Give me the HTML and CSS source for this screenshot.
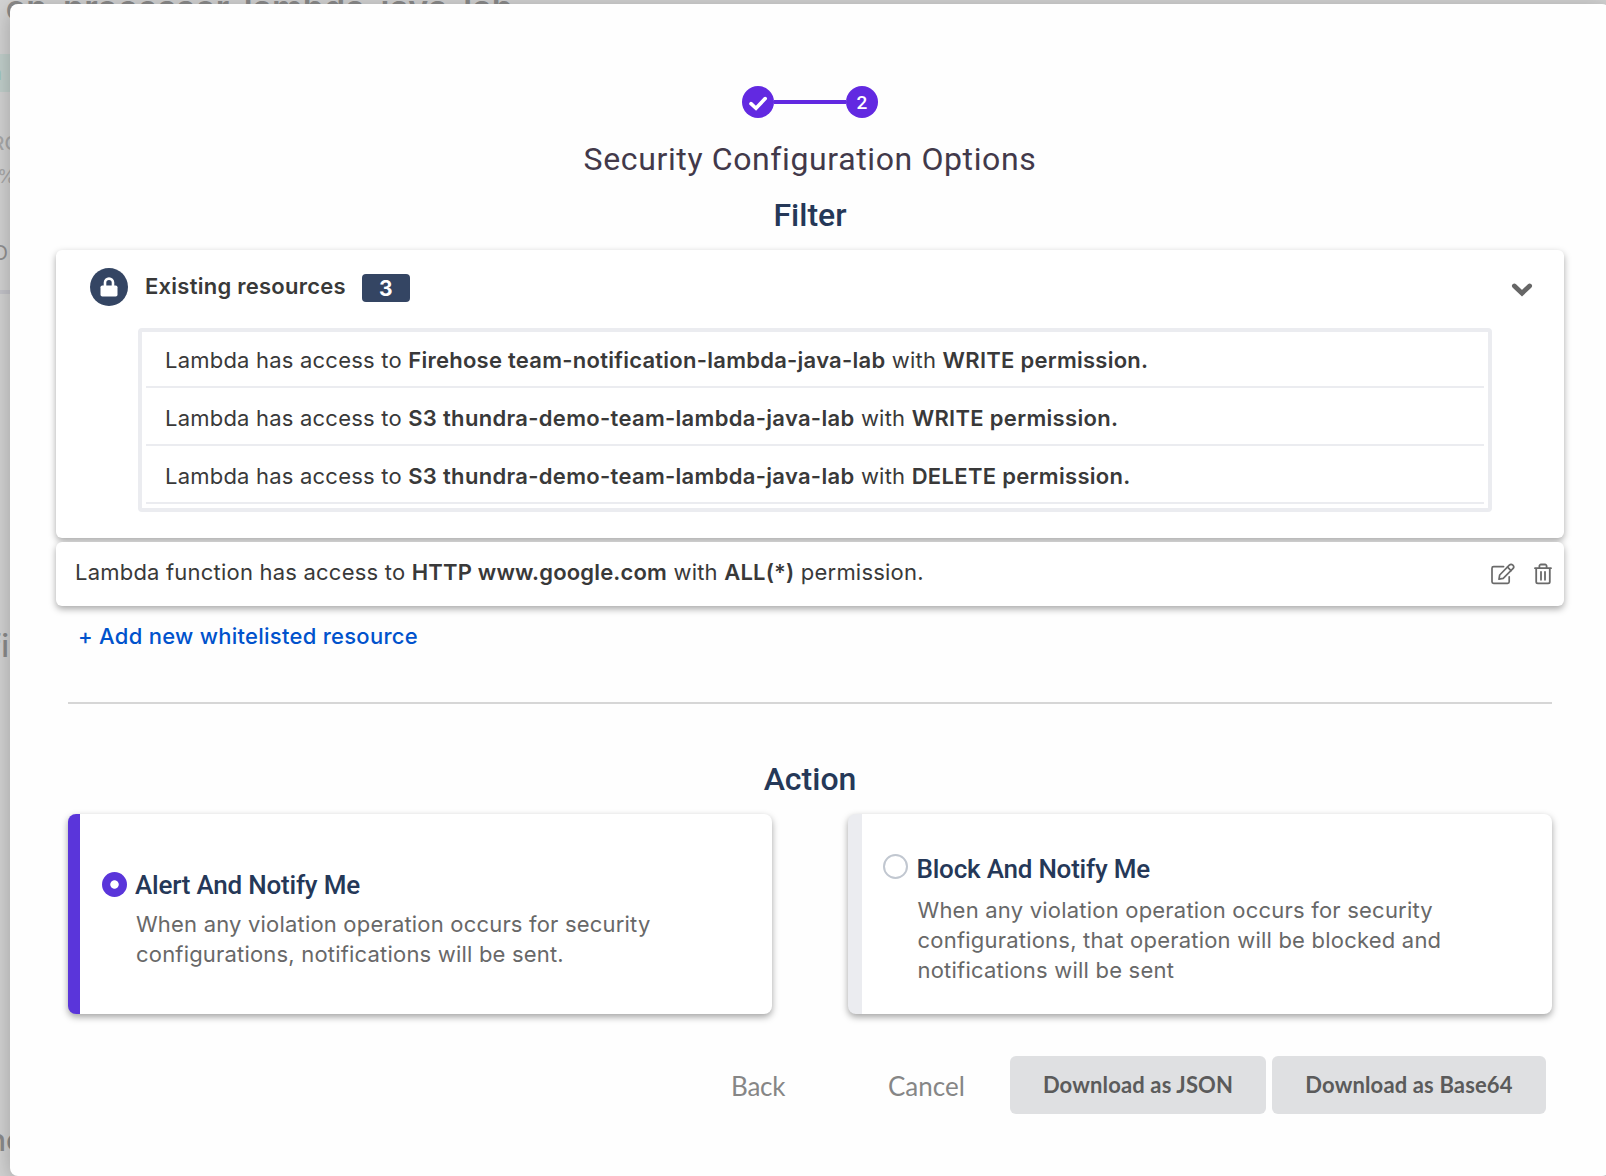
FILE: index.html
```html
<!DOCTYPE html>
<html lang="en">
<head>
<meta charset="utf-8">
<title>Security Configuration Options</title>
<link rel="stylesheet" href="styles.css">
</head>
<body>
<div class="backdrop" aria-hidden="true">
  <div class="bg-name">on-processor-lambda-java-lab</div>
  <div class="bg-tag">n</div>
  <div class="bg-label bg-pro">RO</div>
  <div class="bg-label bg-pct">%</div>
  <div class="bg-label bg-tab">D</div>
  <div class="bg-rule"></div>
  <div class="bg-head bg-config">fi</div>
  <div class="bg-head bg-inc">nc</div>
</div>
<main class="modal">
  <div class="stepper">
    <span class="step"><svg width="20" height="16" viewBox="0 0 20 16"><path d="M3 8.600l5 4.600L17.200 3.600" fill="none" stroke="#fff" stroke-width="3.600" stroke-linecap="round"/></svg></span>
    <span class="bar"></span>
    <span class="step">2</span>
  </div>
  <h1 class="title">Security Configuration Options</h1>
  <h2 class="section">Filter</h2>

  <section class="card existing">
    <header class="existing-head">
      <span class="lock"><svg width="18" height="20" viewBox="0 0 18 20"><path d="M5 9V5.600a4 4 0 0 1 8 0V9" fill="none" stroke="#fff" stroke-width="2.600"/><rect x=".5" y="8.400" width="17" height="11.200" rx="1.800" fill="#fff"/></svg></span>
      <span class="existing-title">Existing resources</span>
      <span class="badge">3</span>
      <svg class="chevron" width="22" height="16" viewBox="0 0 22 16"><path d="M3.400 4l7.600 7.200L18.600 4" fill="none" stroke="#666" stroke-width="4.800" stroke-linecap="round"/></svg>
    </header>
    <ul class="list">
      <li>Lambda has access to <b>Firehose team-notification-lambda-java-lab</b> with <b>WRITE permission.</b></li>
      <li>Lambda has access to <b>S3 thundra-demo-team-lambda-java-lab</b> with <b>WRITE permission.</b></li>
      <li>Lambda has access to <b>S3 thundra-demo-team-lambda-java-lab</b> with <b>DELETE permission.</b></li>
    </ul>
  </section>

  <section class="card rule">
    <p>Lambda function has access to <b>HTTP www.google.com</b> with <b>ALL(*)</b> permission.</p>
    <svg class="edit" width="24" height="22" viewBox="0 0 24 22" fill="none" stroke="#6a6a6a" stroke-width="1.700" stroke-linejoin="round" stroke-linecap="round"><path d="M12.600 3.600H2.600a1.600 1.600 0 0 0-1.600 1.600v13.600a1.600 1.600 0 0 0 1.600 1.600h14a1.600 1.600 0 0 0 1.600-1.600v-5"/><path d="M8 16.200l.7-4.200L18.300 2.200a2.500 2.500 0 0 1 3.600 3.500L12.200 15.300z"/><path d="M16.600 4.200l3.400 3.400"/></svg>
    <svg class="trash" width="18" height="22" viewBox="0 0 18 22" fill="none" stroke="#6a6a6a" stroke-width="1.800" stroke-linecap="round" stroke-linejoin="round"><path d="M1 5.200h16M5.400 5V3.200a1.600 1.600 0 0 1 1.600-1.700h4a1.600 1.600 0 0 1 1.600 1.700V5M2.200 5.400v13.400a1.600 1.600 0 0 0 1.600 1.600h10.400a1.600 1.600 0 0 0 1.600-1.600V5.400M7 8.800v8M11 8.800v8"/></svg>
  </section>

  <a class="add">+ Add new whitelisted resource</a>
  <hr class="divider">
  <h2 class="section action">Action</h2>

  <div class="options">
    <label class="option selected">
      <span class="radio"></span>
      <span class="option-body"><strong>Alert And Notify Me</strong><span class="desc">When any violation operation occurs for security configurations, notifications will be sent.</span></span>
    </label>
    <label class="option">
      <span class="radio"></span>
      <span class="option-body"><strong>Block And Notify Me</strong><span class="desc">When any violation operation occurs for security configurations, that operation will be blocked and notifications will be sent</span></span>
    </label>
  </div>

  <footer class="footer">
    <button class="text-btn back">Back</button>
    <button class="text-btn cancel">Cancel</button>
    <button class="btn json">Download as JSON</button>
    <button class="btn base64">Download as Base64</button>
  </footer>
</main>
</body>
</html>
```
FILE: styles.css
```css
* { box-sizing: border-box; }
body {
  margin: 0;
  width: 1606px;
  height: 1176px;
  overflow: hidden;
  position: relative;
  background: #d4d4d4;
  font: 400 22px/30px Inter, "Liberation Sans", sans-serif;
  letter-spacing: 0.21px;
  color: #393939;
}
b { font-weight: 600; letter-spacing: 0.26px; }

/* Dimmed page behind the dialog */
.backdrop { position: absolute; inset: 0; overflow: hidden; color: #8c8c8c; }
.backdrop > div { position: absolute; white-space: nowrap; letter-spacing: 0; }
.bg-name { right: 1093px; top: -12px; font-size: 34px; line-height: 40px; font-weight: 600; }
.bg-tag { right: 1586px; top: 54px; width: 100px; height: 38px; padding-right: 18px; line-height: 38px; font-size: 20px; text-align: right; font-weight: 600; background: #c2d0cc; color: #9fc9bd; }
.bg-label { right: 1590px; font-size: 19px; line-height: 24px; color: #aaa; }
.bg-pro { right: 1587px; top: 132px; font-weight: 500; }
.bg-pct { top: 165px; }
.bg-tab { right: 1598px; top: 241px; font-size: 20px; color: #929292; }
.bg-rule { left: 0; top: 290px; width: 20px; height: 4px; background: #c5c5cb; }
.bg-head { font-size: 31px; line-height: 36px; font-weight: 500; }
.bg-config { right: 1597px; top: 628px; }
.bg-inc { right: 1582px; top: 1122px; }

.modal {
  position: absolute;
  left: 10px;
  top: 4px;
  width: 1600px;
  height: 1172px;
  padding: 82px 46px 0;
  background: #fefefe;
  border-radius: 8px;
  box-shadow: 0 4px 24px rgba(0, 0, 0, 0.26);
}

.stepper { display: flex; justify-content: center; align-items: center; height: 32px; }
.step {
  display: flex;
  justify-content: center;
  align-items: center;
  width: 32px;
  height: 32px;
  border-radius: 50%;
  background: #6229e1;
  color: #fff;
  font: 500 19px/32px Roboto, sans-serif;
  letter-spacing: 0;
  padding-top: 2px;
}
.bar { width: 72px; height: 4px; background: #6229e1; }

.title {
  margin: 21px 0 0;
  text-align: center;
  font: 400 32px/40px Roboto, sans-serif;
  letter-spacing: 0.62px;
  color: #42394a;
}
.section {
  margin: 16px 0 0;
  text-align: center;
  font: 500 32px/40px Roboto, sans-serif;
  letter-spacing: 0;
  color: #253858;
}

.card { border-radius: 6px; background: #fff; box-shadow: 0 3px 7px rgba(0, 0, 0, 0.34); }
.existing { height: 288px; margin-top: 15px; padding: 18px 32px 0; }
.existing-head { display: flex; align-items: flex-start; height: 60px; }
.lock {
  display: flex;
  align-items: center;
  justify-content: center;
  width: 38px;
  height: 38px;
  margin-left: 2px;
  border-radius: 50%;
  background: #344563;
}
.existing-title { margin: 3px 0 0 17px; width: 200px; white-space: nowrap; font-weight: 600; letter-spacing: 0.25px; }
.badge {
  width: 48px;
  height: 28px;
  margin: 6px 0 0 17px;
  border-radius: 4px;
  background: #344563;
  color: #fff;
  text-align: center;
  font-size: 21px;
  line-height: 29px;
  font-weight: 700;
}
.chevron { margin: 14px -1px 0 auto; }
.list {
  width: 1354px;
  height: 184px;
  margin: 0 0 0 50px;
  padding: 0 4px;
  list-style: none;
  border: 4px solid #ebecf0;
  border-radius: 4px;
}
.list li { height: 58px; padding: 15px 0 0 19px; border-bottom: 2px solid #ebecf0; line-height: 30px; }
.list li:first-child { height: 58px; margin-top: -2px; }
.list li + li b { letter-spacing: 0.31px; }

.rule { display: flex; height: 64px; margin-top: 4px; padding: 0 12px 0 19px; }
.rule p { flex: 1; margin: 0; padding-top: 15px; }
.rule b { letter-spacing: 0.17px; }
.edit { margin: 21px 0 0; }
.trash { margin: 21px 0 0 19px; }

.add { display: block; margin: 15px 0 0 22px; color: #0052cc; font-weight: 500; letter-spacing: 0.27px; }
.divider { height: 2px; margin: 51px 12px 0; border: 0; background: #d6d6d6; }
.action { margin-top: 55px; }

.options { display: flex; gap: 76px; margin: 15px 12px 0; }
.option {
  display: flex;
  align-items: center;
  height: 200px;
  flex: 1;
  padding: 0 80px 0 22px;
  border-left: 12px solid #5a35da;
  border-radius: 8px;
  background: #fff;
  box-shadow: 0 3px 7px rgba(0, 0, 0, 0.36);
}
.option:not(.selected) { border-left: 14px solid #ebecf0; padding-left: 21px; }
.radio { flex: none; align-self: flex-start; width: 25px; height: 25px; margin-top: 40px; border: 2px solid #c1c7d0; border-radius: 50%; }
.selected .radio { margin-top: 58px; border: 0; background: radial-gradient(circle, #fff 3.800px, #5a35da 4.600px); }
.option-body { display: flex; flex-direction: column; align-self: flex-start; margin: 40px 0 0 9px; }
.selected .option-body { margin: 56px 0 0 8px; }
.option strong { font: 500 26px/30px Roboto, sans-serif; letter-spacing: -0.21px; color: #253858; }
.desc { width: 540px; margin: 11px 0 0 1px; color: #686868; line-height: 30px; }
.selected .desc { margin-top: 9px; letter-spacing: 0.19px; }

.footer { display: flex; margin: 42px 18px 0 0; justify-content: flex-end; }
button { border: 0; padding: 0; background: none; font: 400 26px/30px Lato, sans-serif; color: #868686; letter-spacing: 0; }
.text-btn { height: 58px; padding-top: 2px; text-align: left; }
.back { width: 157px; letter-spacing: -0.2px; }
.cancel { width: 122px; }
.btn { height: 58px; border-radius: 6px; background: #dfe0e2; color: #5b5b5b; font-size: 22px; font-weight: 700; letter-spacing: 0.14px; }
.json { width: 256px; }
.base64 { width: 274px; margin-left: 6px; }
```
